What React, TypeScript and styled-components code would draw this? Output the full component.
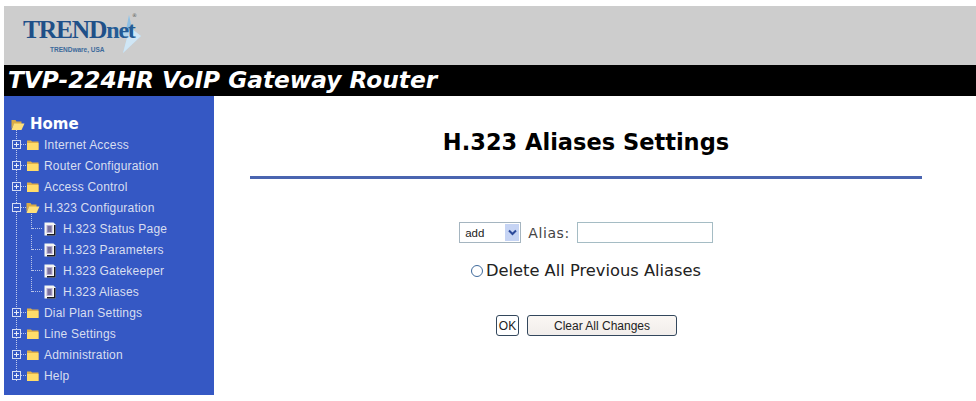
import styled, { createGlobalStyle } from "styled-components";

const treeItems = [
  { label: "Internet Access" },
  { label: "Router Configuration" },
  { label: "Access Control" },
  {
    label: "H.323 Configuration",
    open: true,
    pages: ["H.323 Status Page", "H.323 Parameters", "H.323 Gatekeeper", "H.323 Aliases"],
  },
  { label: "Dial Plan Settings" },
  { label: "Line Settings" },
  { label: "Administration" },
  { label: "Help" },
];

function FolderIcon({ open }: { open?: boolean }) {
  return (
    <svg width="14" height="13" viewBox="0 0 14 13">
      {open ? (
        <>
          <path d="M0.5 2h4l1 1.5h5V6H3L0.5 11z" fill="#d9ab45" />
          <path d="M3 5.5h10.5L10.5 12H0.5z" fill="#ffe07a" />
        </>
      ) : (
        <>
          <path d="M1 2.5h4l1 1h6.5v8.5H1z" fill="#e0b04a" />
          <path d="M1 5h11.5v6.5q0 .5-.5.5H1.5q-.5 0-.5-.5z" fill="#ffdc6a" />
        </>
      )}
    </svg>
  );
}

function PageIcon() {
  return (
    <svg width="12" height="14" viewBox="0 0 12 14">
      <path d="M0.5 0.5h9l2 2v11h-11z" fill="#f6f6f2" />
      <path d="M10 3h1.5v10.5H3V12h7z" fill="#1b1b22" />
      <path d="M2.5 3h6v8h-6z" fill="#b9aed6" />
      <path d="M3.5 5h4M3.5 7h4M3.5 9h4" stroke="#3a3560" strokeWidth="1" />
    </svg>
  );
}

function ToggleIcon({ open }: { open?: boolean }) {
  return (
    <ToggleBox width="9" height="9" viewBox="0 0 9 9">
      <rect x="0.5" y="0.5" width="8" height="8" fill="#3558c4" stroke="#d5dcf2" />
      <path d={open ? "M2 4.5h5" : "M2 4.5h5M4.5 2v5"} stroke="#e8ecf8" />
    </ToggleBox>
  );
}

function App() {
  return (
    <Page>
      <GlobalStyle />
      <LogoBar>
        <Logo>
          <Crystal width="24" height="38" viewBox="0 0 24 38">
            <path d="M11 0l3 14 9 7-18 17 4-15-7-6 7-3z" fill="#b3d6ee" />
            <path d="M14 14l9 7-18 17 4-15z" fill="#d0e6f5" />
            <path d="M11 0l3 14-5 3-1-2z" fill="#8fbfe3" />
          </Crystal>
          <LogoName>TREND<LogoSuffix>net</LogoSuffix></LogoName>
          <LogoSub>TRENDware, USA</LogoSub>
          <Registered>®</Registered>
        </Logo>
      </LogoBar>
      <TitleBar>TVP-224HR VoIP Gateway Router</TitleBar>
      <Body>
        <Sidebar>
          <HomeRow>
            <FolderIcon open />
            <HomeLabel>Home</HomeLabel>
          </HomeRow>
          <Tree>
            {treeItems.map((item) => (
              <div key={item.label}>
                <FolderRow>
                  <ToggleIcon open={item.open} />
                  <Dots />
                  <FolderIcon open={item.open} />
                  <NavLabel>{item.label}</NavLabel>
                </FolderRow>
                {item.pages?.map((page) => (
                  <PageRow key={page}>
                    <Branch />
                    <PageIcon />
                    <PageLabel>{page}</PageLabel>
                  </PageRow>
                ))}
              </div>
            ))}
          </Tree>
        </Sidebar>
        <Content>
          <Heading>H.323 Aliases Settings</Heading>
          <Rule />
          <AliasRow>
            <AddSelect>
              add
              <SelectArrow>
                <svg width="9" height="7" viewBox="0 0 9 7">
                  <path d="M1 1.5l3.5 3.5L8 1.5" fill="none" stroke="#2c4a9a" strokeWidth="2" />
                </svg>
              </SelectArrow>
            </AddSelect>
            <AliasLabel>Alias:</AliasLabel>
            <AliasInput />
          </AliasRow>
          <DeleteRow>
            <Radio />
            Delete All Previous Aliases
          </DeleteRow>
          <ButtonRow>
            <OkButton>OK</OkButton>
            <ClearButton>Clear All Changes</ClearButton>
          </ButtonRow>
        </Content>
      </Body>
    </Page>
  );
}

const GlobalStyle = createGlobalStyle`
  html, body {
    margin: 0;
    background: #ffffff;
    overflow: hidden;
  }
`;

const Page = styled.div`
  width: 976px;
  height: 401px;
  padding: 6px 0 6px 4px;
  box-sizing: border-box;
  display: flex;
  flex-direction: column;
  font-family: "DejaVu Sans", sans-serif;
`;

const LogoBar = styled.header`
  height: 59px;
  background: #cdcdcd;
  padding: 13px 0 0 19px;
  box-sizing: border-box;
  flex: none;
`;

const Logo = styled.div`
  position: relative;
  width: 120px;
`;

const LogoName = styled.div`
  position: relative;
  font-family: "Liberation Serif", serif;
  font-weight: 700;
  font-size: 25.5px;
  line-height: 22px;
  letter-spacing: -1.2px;
  color: #1f5088;
`;

const LogoSuffix = styled.span`
  font-size: 24px;
  color: #245c96;
`;

const LogoSub = styled.div`
  font-family: "Liberation Sans", sans-serif;
  font-weight: 700;
  font-size: 6.5px;
  line-height: 9px;
  margin: 4px 0 0 27px;
  color: #3d6a9b;
`;

const Crystal = styled.svg`
  position: absolute;
  left: 95px;
  top: -4px;
`;

const Registered = styled.span`
  position: absolute;
  left: 109px;
  top: -7px;
  font-size: 5px;
  color: #555555;
`;

const TitleBar = styled.div`
  height: 31px;
  flex: none;
  background: #000000;
  color: #ffffff;
  font-weight: 700;
  font-style: italic;
  font-size: 23.25px;
  line-height: 30px;
  padding-left: 4px;
  white-space: nowrap;
`;

const Body = styled.div`
  flex: 1;
  display: flex;
  min-height: 0;
`;

const Sidebar = styled.nav`
  width: 210px;
  flex: none;
  background: #3558c4;
  padding-top: 18px;
  box-sizing: border-box;
  color: #d8def0;
`;

const HomeRow = styled.div`
  height: 20px;
  display: flex;
  align-items: center;
  gap: 5px;
  padding-left: 7px;
`;

const HomeLabel = styled.span`
  color: #ffffff;
  font-weight: 700;
  font-size: 15px;
`;

const Tree = styled.div`
  position: relative;

  &::before {
    content: "";
    position: absolute;
    left: 12px;
    top: -4px;
    height: 251px;
    border-left: 1px dotted #c3cdee;
  }
`;

const ToggleBox = styled.svg`
  position: relative;
  flex: none;
`;

const FolderRow = styled.div`
  height: 21px;
  display: flex;
  align-items: center;
  padding-left: 8px;
`;

const Dots = styled.span`
  width: 5px;
  border-top: 1px dotted #b9c4e8;
`;

const PageRow = styled.div`
  height: 21px;
  display: flex;
  align-items: center;
  padding-left: 28px;
`;

const Branch = styled.span`
  width: 12px;
  height: 21px;
  position: relative;
  flex: none;

  &::before {
    content: "";
    position: absolute;
    left: 0;
    top: 10px;
    width: 10px;
    border-top: 1px dotted #b9c4e8;
  }

  &::after {
    content: "";
    position: absolute;
    left: -1px;
    top: -4px;
    height: 15px;
    border-left: 1px dotted #b9c4e8;
  }
`;

const NavLabel = styled.span`
  margin-left: 4px;
  font-family: "Liberation Sans", sans-serif;
  font-size: 12px;
  letter-spacing: 0.2px;
  white-space: nowrap;
`;

const PageLabel = styled(NavLabel)`
  margin-left: 7px;
`;

const Content = styled.main`
  flex: 1;
  display: flex;
  flex-direction: column;
  align-items: center;
  padding: 0 54px 0 36px;
  box-sizing: border-box;
`;

const Heading = styled.h1`
  margin: 34px 0 0;
  font-size: 22.5px;
  line-height: 24px;
  font-weight: 700;
  color: #000000;
`;

const Rule = styled.div`
  align-self: stretch;
  height: 3px;
  margin-top: 22px;
  background: #4a65b0;
`;

const AliasRow = styled.div`
  display: flex;
  align-items: center;
  margin-top: 43px;
  gap: 7px;
  font-size: 14px;
  color: #444444;
`;

const AddSelect = styled.div`
  width: 62px;
  height: 21px;
  box-sizing: border-box;
  border: 1px solid #a5b5c0;
  display: flex;
  align-items: center;
  justify-content: space-between;
  padding: 1px 1px 1px 5px;
  font-family: "Liberation Sans", sans-serif;
  font-size: 11.5px;
  color: #222222;
`;

const SelectArrow = styled.span`
  width: 14px;
  height: 17px;
  background: #c6d4f4;
  display: flex;
  align-items: center;
  justify-content: center;
`;

const AliasLabel = styled.span`
  letter-spacing: 0.6px;
`;

const AliasInput = styled.div`
  width: 136px;
  height: 21px;
  box-sizing: border-box;
  border: 1px solid #a5bcc4;
`;

const DeleteRow = styled.div`
  display: flex;
  align-items: center;
  margin-top: 18px;
  gap: 3px;
  font-size: 16.3px;
  line-height: 19px;
  color: #222222;
`;

const Radio = styled.span`
  width: 10px;
  height: 10px;
  border: 1px solid #3f6a9c;
  border-radius: 50%;
`;

const ButtonRow = styled.div`
  display: flex;
  gap: 8px;
  margin-top: 35px;
  margin-left: 1px;
`;

const OkButton = styled.div`
  width: 23px;
  height: 21px;
  box-sizing: border-box;
  border: 1px solid #33475c;
  border-radius: 3px;
  display: flex;
  align-items: center;
  justify-content: center;
  font-family: "Liberation Sans", sans-serif;
  font-size: 12px;
  color: #222222;
`;

const ClearButton = styled(OkButton)`
  width: 150px;
  background: linear-gradient(#fbf7f3, #f1edeb);
`;

export default App;
